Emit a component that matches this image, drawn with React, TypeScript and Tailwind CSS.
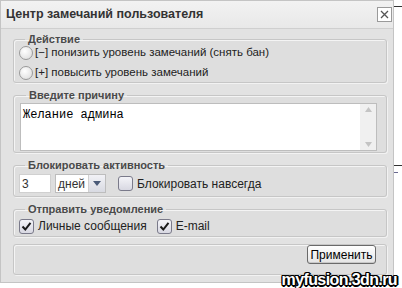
import { useState } from "react"

function Fieldset({ legend, className, children }: { legend?: string; className?: string; children: React.ReactNode }) {
  return (
    <fieldset
      className={
        "ml-[12px] mr-[6px] rounded-[3px] border border-[#c6c6c6] bg-[#dedede] shadow-[inset_1px_1px_0_#f4f4f4,1px_1px_0_#f2f2f2] " +
        (className ?? "")
      }
    >
      {legend && (
        <legend className="ml-[6px] px-[3px] text-[11px] font-bold leading-[13px] text-[#4a4a4a]">{legend}</legend>
      )}
      {children}
    </fieldset>
  )
}

function Radio({ label }: { label: string }) {
  return (
    <label className="flex h-[20px] items-center gap-[2px]">
      <span className="h-[14px] w-[14px] rounded-full border border-[#9a9a9a] bg-[radial-gradient(circle_at_40%_35%,#ffffff,#e4e4e4_70%,#cfcfcf)]" />
      <span className="text-[11.5px] text-[#222]">{label}</span>
    </label>
  )
}

function Check({ label, checked }: { label: string; checked?: boolean }) {
  return (
    <label className="flex items-center gap-[4px]">
      <span className="flex h-[15px] w-[15px] items-center justify-center rounded-[3px] border border-[#7a7a8a] bg-[linear-gradient(#f4f4f8,#d8d8e2)]">
        {checked && (
          <svg width="11" height="11" viewBox="0 0 11 11">
            <path d="M1.5 5.5 L4.3 8.5 L9.5 1.8" fill="none" stroke="#1a1a1a" strokeWidth="2" />
          </svg>
        )}
      </span>
      <span className="text-[12px] text-[#222]">{label}</span>
    </label>
  )
}

export default function App() {
  const [reason] = useState("Желание админа")

  return (
    <div className="relative flex h-[288px] w-[402px] overflow-hidden bg-white font-['Liberation_Sans',Arial,sans-serif]">
      {/* Dialog */}
      <div className="flex h-[283px] w-[394px] flex-col border border-[#c4c4c4] bg-[#e2e2e2]">
        {/* Header */}
        <div className="flex h-[27px] items-center justify-between bg-[linear-gradient(#f2f2f2,#e8e8e8)] pl-[5px] pr-[1px]">
          <span className="text-[12.5px] font-bold text-[#333]">Центр замечаний пользователя</span>
          <button className="flex h-[15px] w-[15px] items-center justify-center border border-[#9a9a9a] bg-white">
            <svg width="9" height="9" viewBox="0 0 9 9">
              <path d="M1 1 L8 8 M8 1 L1 8" stroke="#555" strokeWidth="1.3" />
            </svg>
          </button>
        </div>

        <div className="flex flex-1 flex-col border-t border-[#cfcfcf] pt-[4px]">
          <Fieldset legend="Действие" className="h-[50px] px-[5px]">
            <div className="-mt-[3px]">
              <Radio label="[−] понизить уровень замечаний (снять бан)" />
              <Radio label="[+] повысить уровень замечаний" />
            </div>
          </Fieldset>

          <Fieldset legend="Введите причину" className="mt-[6px] h-[64px] pl-[6px] pr-[9px] pt-[1px]">
            <div className="flex h-[48px] border border-[#bdbdbd] bg-white">
              <div className="flex-1 px-[2px] pt-[2px] font-['Liberation_Mono','Courier_New',monospace] text-[12px] text-black">
                {reason}
              </div>
              <div className="flex w-[16px] flex-col items-center justify-between bg-[#f0f0f0] py-[3px]">
                <svg width="7" height="5" viewBox="0 0 7 5"><path d="M0 5 L3.5 0 L7 5Z" fill="#c4c4c4" /></svg>
                <svg width="7" height="5" viewBox="0 0 7 5"><path d="M0 0 L3.5 5 L7 0Z" fill="#c4c4c4" /></svg>
              </div>
            </div>
          </Fieldset>

          <Fieldset legend="Блокировать активность" className="mt-[6px] h-[38px] px-[5px] pt-[2px]">
            <div className="flex items-center">
              <div className="flex h-[19px] w-[32px] items-center border border-[#d0d0d0] bg-white pl-[2px] text-[12px] text-[#333]">
                3
              </div>
              <div className="ml-[4px] flex h-[19px] w-[51px] items-center border border-[#bdbdbd] bg-white">
                <span className="flex-1 pl-[2px] text-[12px] text-[#333]">дней</span>
                <span className="flex h-[17px] w-[17px] items-center justify-center border-l border-[#d0d0d0] bg-[linear-gradient(#f2f2f6,#d8dae2)]">
                  <svg width="8" height="5" viewBox="0 0 8 5"><path d="M0 0 L4 5 L8 0Z" fill="#4a5a78" /></svg>
                </span>
              </div>
              <div className="ml-[12px]">
                <Check label="Блокировать навсегда" />
              </div>
            </div>
          </Fieldset>

          <Fieldset legend="Отправить уведомление" className="mt-[6px] h-[34px] px-[5px] pt-[1px]">
            <div className="flex items-center gap-[10px]">
              <Check label="Личные сообщения" checked />
              <Check label="E-mail" checked />
            </div>
          </Fieldset>

          <Fieldset className="mt-[7px] flex h-[31px] items-center justify-end pr-[10px]">
            <button className="h-[19px] w-[69px] rounded-[3px] border border-[#6a6a6a] bg-[linear-gradient(#ffffff,#e4e4e4)] text-[12px] text-black shadow-[inset_0_-1px_0_#c8c8c8]">
              Применить
            </button>
          </Fieldset>
        </div>
      </div>

      {/* Right page strip */}
      <div className="flex flex-1 flex-col">
        <div className="mt-[6px] h-[1px] w-[8px] bg-[#333]" />
        <div className="mt-[158px] h-[1px] w-[8px] bg-[#333]" />
        <div className="mt-[6px] h-[1px] w-[4px] bg-[#6a6a90]" />
      </div>

      {/* Watermark */}
      <span className="absolute bottom-[-1px] right-[5px] text-[16px] font-bold leading-[18px] tracking-[-0.6px] text-white [text-shadow:-1px_-1px_0_#000,1px_-1px_0_#000,-1px_1px_0_#000,1px_1px_0_#000,0_-1px_0_#000,0_1px_0_#000,-1px_0_0_#000,1px_0_0_#000,2px_0_0_#000,0_2px_0_#000]">
        myfusion.3dn.ru
      </span>
    </div>
  )
}
